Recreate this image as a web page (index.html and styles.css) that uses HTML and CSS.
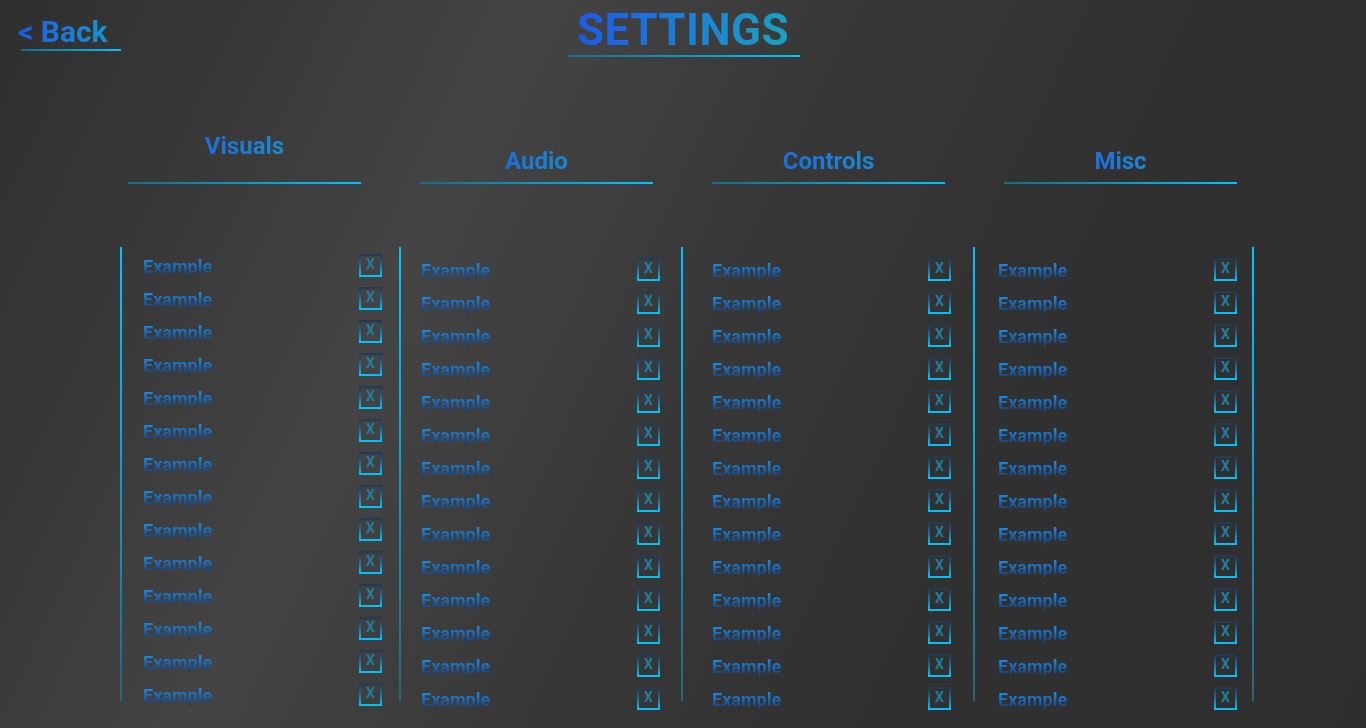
FILE: index.html
```html
<!DOCTYPE html>
<html lang="en">
<head>
<meta charset="utf-8">
<title>Settings</title>
<link rel="stylesheet" href="styles.css">
</head>
<body>
<div class="page">
  <header class="topbar">
    <div class="back-cell"><a class="back" href="#"><span class="grad-text back-text">&lt; Back</span></a></div>
    <h1 class="title"><span class="grad-text title-text">SETTINGS</span></h1>
    <div></div>
  </header>

  <div class="headers">
    <div class="heading heading-raised"><span class="grad-text heading-text">Visuals</span></div>
    <div class="heading"><span class="grad-text heading-text">Audio</span></div>
    <div class="heading"><span class="grad-text heading-text">Controls</span></div>
    <div class="heading"><span class="grad-text heading-text">Misc</span></div>
  </div>

  <div class="columns">
    <div class="sep"></div>
    <div class="col col-visuals" id="c1"></div>
    <div class="sep"></div>
    <div class="col col-audio" id="c2"></div>
    <div class="sep"></div>
    <div class="col col-controls" id="c3"></div>
    <div class="sep"></div>
    <div class="col col-misc" id="c4"></div>
    <div class="sep"></div>
  </div>
</div>
<script>
  ['c1','c2','c3','c4'].forEach(function (id) {
    var col = document.getElementById(id);
    for (var i = 0; i < 14; i++) {
      var row = document.createElement('div');
      row.className = 'row';
      row.innerHTML = '<span class="label grad-text">Example</span><span class="box"><span class="x">X</span></span>';
      col.appendChild(row);
    }
  });
</script>
</body>
</html>
```

FILE: styles.css
```css
* { box-sizing: border-box; }
html, body { margin: 0; padding: 0; }
body {
  width: 1366px;
  height: 728px;
  overflow: hidden;
  font-family: Roboto, "Liberation Sans", Arial, sans-serif;
  background: linear-gradient(115deg, #2f2f2f 0%, #3a3a3a 18%, #444444 31%, #383838 50%, #313131 68%, #2e2e2e 100%);
}
.page { width: 1366px; height: 728px; }

.grad-text {
  -webkit-background-clip: text;
  background-clip: text;
  -webkit-text-fill-color: transparent;
  color: transparent;
}

.topbar {
  display: grid;
  grid-template-columns: 1fr auto 1fr;
  align-items: start;
}
.back {
  display: block;
  margin: 15px 0 0 21px;
  width: 100px;
  text-indent: -3px;
  font-size: 30px;
  line-height: 34px;
  font-weight: 700;
  text-decoration: none;
  border-bottom: 2px solid #00c4ff;
  border-image: linear-gradient(to right, #1b6a88, #00c4ff) 1;
}
.back-text {
  background-image: linear-gradient(to right, #1a5de8, #1a92cc);
}
.title {
  margin: 6px 0 0 0;
  width: 233px;
  text-align: center;
  font-size: 44px;
  line-height: 48px;
  font-weight: 700;
  letter-spacing: 0.5px;
  padding-bottom: 1px;
  border-bottom: 2px solid #00c4ff;
  border-image: linear-gradient(to right, #1b6a88, #00c4ff) 1;
}
.title-text {
  background-image: linear-gradient(to right, #1c5ae9, #1aa2c3);
}

.headers {
  display: flex;
  gap: 59px;
  margin: 65px 0 0 128px;
}
.heading {
  width: 233px;
  height: 62px;
  display: flex;
  justify-content: center;
  align-items: flex-end;
  padding-bottom: 7px;
  font-size: 24px;
  line-height: 28px;
  font-weight: 700;
  border-bottom: 2px solid #00c4ff;
  border-image: linear-gradient(to right, #1b6a88, #00c4ff) 1;
}
.heading-raised { padding-bottom: 22px; }
.heading-text {
  background-image: linear-gradient(to right, #1a70de, #1a8ad0);
}

.columns {
  display: flex;
  margin: 63px 0 0 120px;
  height: 454px;
}
.sep {
  flex: 0 0 2px;
  width: 2px;
  height: 100%;
  background: linear-gradient(to bottom, #00c4ff 0%, #0aa8dd 40%, #1f7fa6 75%, #2a6478 100%);
}
.col {
  padding-top: 7px;
}
.col-visuals { width: 277px; padding-left: 21px; padding-top: 3px; }
.col-audio { width: 280px; padding-left: 20px; }
.col-controls { width: 290px; padding-left: 29px; }
.col-misc { width: 277px; padding-left: 23px; }

.row {
  width: 239px;
  height: 33px;
  display: flex;
  justify-content: space-between;
  align-items: center;
}
.label {
  display: block;
  font-size: 18px;
  line-height: 21px;
  font-weight: 700;
  background-image: linear-gradient(to bottom, #1a8ee2 15%, #1b6fbe 45%, #1e4a82 78%, #2c3844 100%);
}
.box {
  width: 23px;
  height: 23px;
  margin-bottom: 3px;
  border: 2px solid #00c4ff;
  border-image: linear-gradient(to bottom, #243850 0%, #1a6a9a 45%, #00c4ff 100%) 1;
  display: flex;
  justify-content: center;
  align-items: center;
}
.x {
  font-size: 14px;
  line-height: 14px;
  font-weight: 700;
  color: #1f7e9f;
  margin-top: -3px;
}
```
